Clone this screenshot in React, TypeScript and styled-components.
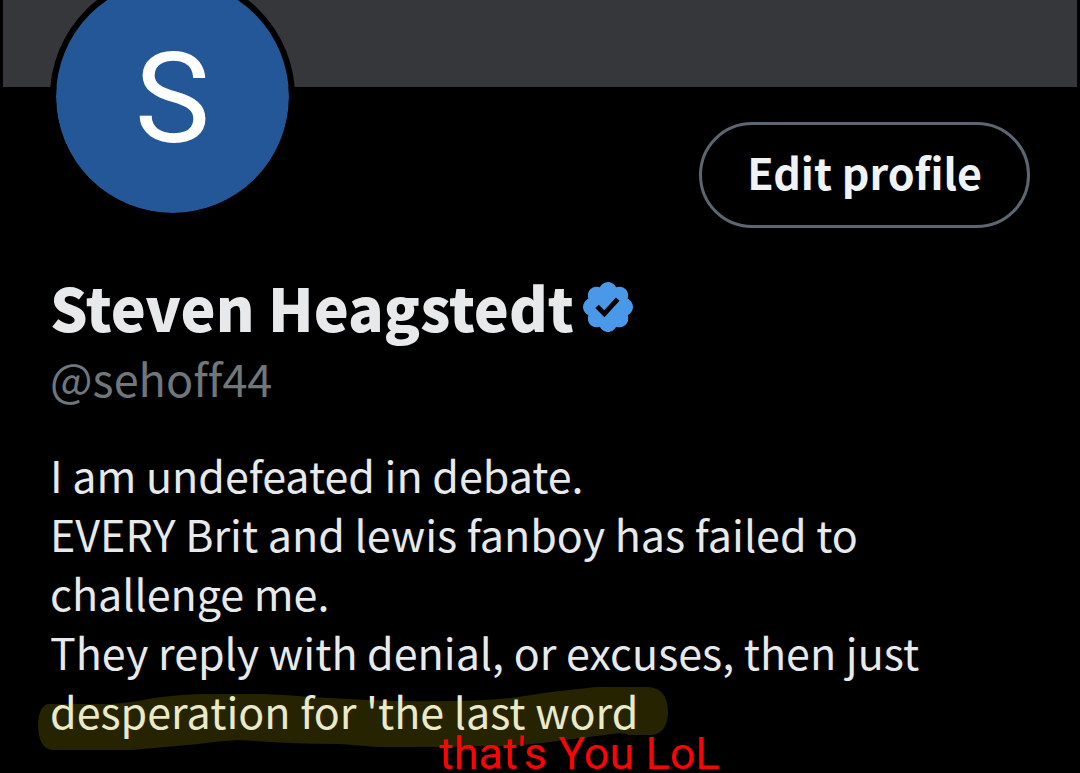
import React from "react";
import styled, { createGlobalStyle } from "styled-components";

const GlobalStyle = createGlobalStyle`
  * { box-sizing: border-box; }
  body {
    margin: 0;
    background: #000;
    font-family: "Noto Sans CJK SC", "Noto Sans", sans-serif;
    font-variant-ligatures: none;
  }
`;

const Profile = styled.main`
  color: #e7e9ea;
`;

const Banner = styled.div`
  height: 87px;
  margin: 0 3px;
  background: #36373b;
`;

const Body = styled.section`
  padding: 0 50px 32px;
`;

const TopRow = styled.div`
  display: flex;
  justify-content: space-between;
  align-items: flex-start;
`;

const Avatar = styled.div`
  display: flex;
  align-items: center;
  justify-content: center;
  width: 245px;
  height: 245px;
  margin-top: -113px;
  padding-top: 4px;
  border: 6px solid #000;
  border-radius: 50%;
  background: #235797;
  background-clip: padding-box;
  color: #fff;
  font-family: Roboto, sans-serif;
  font-size: 127px;
  line-height: 1;
`;

const EditButton = styled.button`
  height: 106px;
  margin-top: 35px;
  padding: 0 45px 8px;
  border: 3px solid #5b6670;
  border-radius: 53px;
  background: transparent;
  color: #eff3f4;
  font-family: inherit;
  font-size: 43px;
  font-weight: 700;
  line-height: 60px;
`;

const NameRow = styled.div`
  display: flex;
  align-items: center;
  gap: 9px;
  margin-top: 41px;
`;

const Name = styled.h1`
  margin: 0;
  font-size: 59px;
  font-weight: 900;
  line-height: 76px;
`;

const Badge = styled.svg`
  display: block;
  width: 50px;
  height: 50px;
`;

const Handle = styled.p`
  margin: 3px 0 0;
  color: #71767b;
  font-size: 45px;
  line-height: 60px;
`;

const Bio = styled.p`
  margin: 37px 0 0;
  font-size: 43px;
  line-height: 59px;
`;

const Marked = styled.span`
  position: relative;
  display: inline-block;
`;

const Marker = styled.svg`
  position: absolute;
  top: 5px;
  left: -12px;
  width: 630px;
  height: 66px;
  pointer-events: none;
`;

const Note = styled.span`
  position: absolute;
  top: 53px;
  left: 389px;
  color: #fa0505;
  font-family: Roboto, sans-serif;
  font-size: 45px;
  line-height: 40px;
  white-space: nowrap;
`;

export default function App() {
  return (
    <>
      <GlobalStyle />
      <Profile>
        <Banner />
        <Body>
          <TopRow>
            <Avatar>S</Avatar>
            <EditButton type="button">Edit profile</EditButton>
          </TopRow>
          <NameRow>
            <Name>Steven Heagstedt</Name>
            <Badge viewBox="1.6 1.6 18.8 18.8" role="img" aria-label="Verified account">
              <path
                fill="#4a99e9"
                d="M20.396 11c-.018-.646-.215-1.275-.57-1.816-.354-.54-.852-.972-1.438-1.246.223-.607.27-1.264.14-1.897-.131-.634-.437-1.218-.882-1.687-.47-.445-1.053-.75-1.687-.882-.633-.13-1.29-.083-1.897.14-.273-.587-.704-1.086-1.245-1.44S11.647 1.62 11 1.604c-.646.017-1.273.213-1.813.568s-.969.854-1.24 1.44c-.608-.223-1.267-.272-1.902-.14-.635.13-1.22.436-1.69.882-.445.47-.749 1.055-.878 1.688-.13.633-.08 1.29.144 1.896-.587.274-1.087.705-1.443 1.245-.356.54-.555 1.17-.574 1.817.02.647.218 1.276.574 1.817.356.54.856.972 1.443 1.245-.224.606-.274 1.263-.144 1.896.13.634.433 1.218.877 1.688.47.443 1.054.747 1.687.878.633.132 1.29.084 1.897-.136.274.586.705 1.084 1.246 1.439.54.354 1.17.551 1.816.569.647-.016 1.276-.213 1.817-.567s.972-.854 1.245-1.44c.604.239 1.266.296 1.903.164.636-.132 1.22-.447 1.68-.907.46-.46.776-1.044.908-1.681s.075-1.299-.165-1.903c.586-.274 1.084-.705 1.439-1.246.354-.54.551-1.17.569-1.816zM9.662 14.85l-3.429-3.428 1.293-1.302 2.072 2.072 4.4-4.794 1.347 1.246z"
              />
            </Badge>
          </NameRow>
          <Handle>@sehoff44</Handle>
          <Bio>
            I am undefeated in debate.
            <br />
            EVERY Brit and lewis fanboy has failed to
            <br />
            challenge me.
            <br />
            They reply with denial, or excuses, then just
            <br />
            <Marked>
              desperation for 'the last word
              <Marker viewBox="0 0 630 66" aria-hidden="true">
                <path
                  fill="#fff000"
                  fillOpacity="0.15"
                  d="M10 18 H72 Q92 17 116 12 Q145 8 170 8 H225 Q250 9 272 11 L330 14 Q370 16 410 15 Q445 15 473 12 Q515 5 558 1 H610 Q630 2 630 27 Q629 47 614 49 H592 Q584 46 574 48 L504 57 Q475 61 440 60 Q400 61 375 61 H339 L303 58 Q275 58 250 57 L200 54 Q180 55 160 58 L94 64 H15 Q0 63 0 38 Q1 20 10 18 Z"
                />
              </Marker>
              <Note>that's You LoL</Note>
            </Marked>
          </Bio>
        </Body>
      </Profile>
    </>
  );
}
